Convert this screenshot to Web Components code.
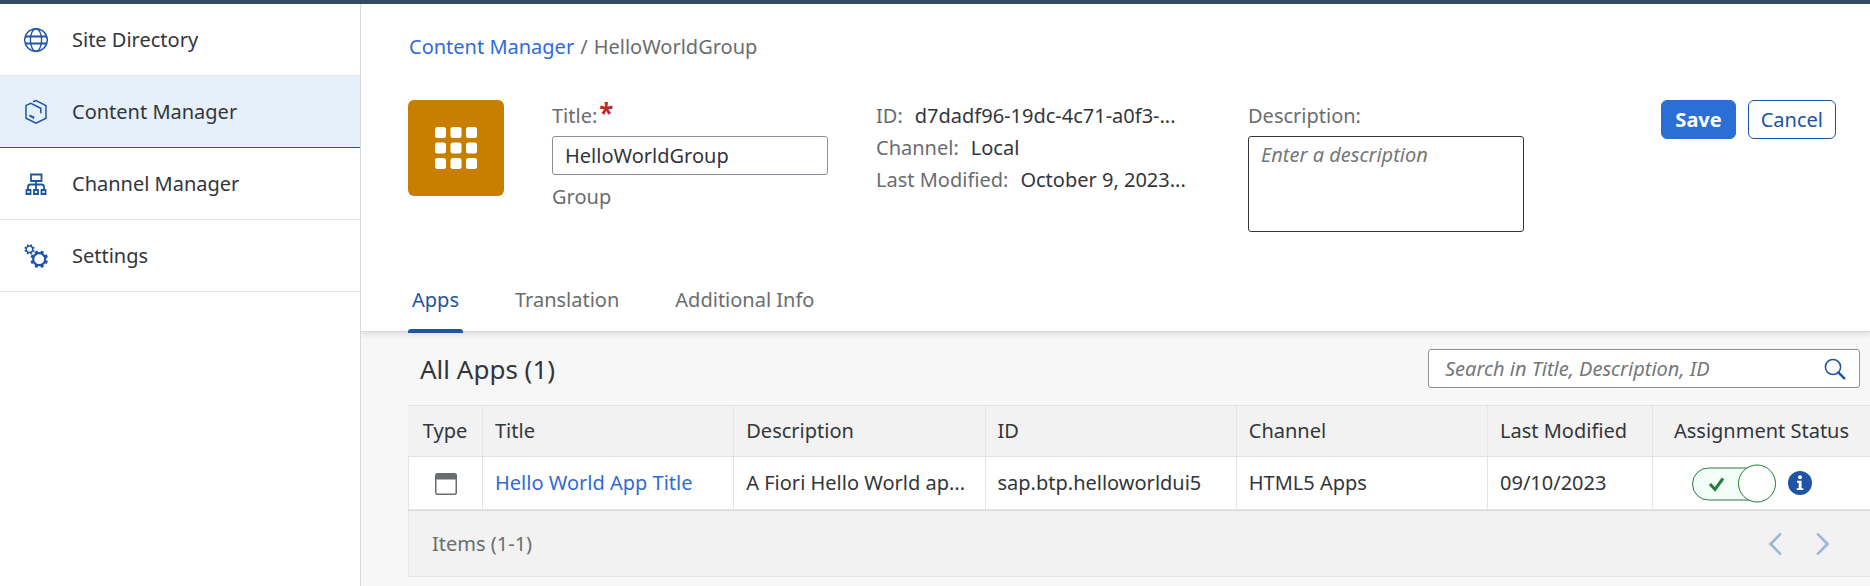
<!DOCTYPE html>
<html lang="en">
<head>
<meta charset="utf-8">
<meta name="viewport" content="width=device-width, initial-scale=1">
<title>Content Manager</title>
<style>
  html, body { height: 100%; }
  body {
    margin: 0;
    --brand: #1d54a4;
    --link: #2f6bd8;
    --text: #32363a;
    --muted: #6a6d70;
    --line: #e4e4e4;
    --field: #89919a;
    font: 20px/24px "Noto Sans", "Open Sans", sans-serif;
    color: var(--text);
    background: #f7f7f7;
  }
</style>
</head>
<body>
<site-shell>
  <side-nav slot="nav">
    <nav-item href="#sites" icon="globe">Site Directory</nav-item>
    <nav-item href="#content" icon="box" selected>Content Manager</nav-item>
    <nav-item href="#channels" icon="tree">Channel Manager</nav-item>
    <nav-item href="#settings" icon="gears">Settings</nav-item>
  </side-nav>
  <group-header></group-header>
  <tab-bar>
    <tab-item selected>Apps</tab-item>
    <tab-item>Translation</tab-item>
    <tab-item>Additional Info</tab-item>
  </tab-bar>
  <apps-panel></apps-panel>
</site-shell>

<script>
const gear = (cx, cy, r, teeth, w, h, stroke) => {
  let out = `<circle cx="${cx}" cy="${cy}" r="${r}" fill="none" stroke="currentColor" stroke-width="${stroke}"/>`;
  for (let i = 0; i < teeth; i++) {
    out += `<rect x="${cx - w / 2}" y="${cy - r - h}" width="${w}" height="${h}" fill="currentColor" transform="rotate(${(i + .5) * 360 / teeth} ${cx} ${cy})"/>`;
  }
  return out;
};

const icons = {
  globe: `<svg width="24" height="26" viewBox="0 0 24 26" fill="none" stroke="currentColor"><circle cx="12" cy="13" r="11.3" stroke-width="1.4"/><ellipse cx="12" cy="13" rx="5.6" ry="11.3" stroke-width="1.4"/><path d="M1.4 9.5h21.2M1.4 16.5h21.2" stroke-width="2"/></svg>`,
  box: `<svg width="24" height="26" viewBox="0 0 24 26" fill="none" stroke="currentColor" stroke-width="1.5"><path d="M9 2.8L12 1.6l10 5v12.6L12 24.2 2 19.2V6.4l4.8-2L16.8 9.3v5"/><path d="M5.4 16.4l4.8 2.6" stroke-width="2"/></svg>`,
  tree: `<svg width="24" height="26" viewBox="0 0 24 26" fill="none" stroke="currentColor" stroke-width="1.8"><path d="M7 3.5h10.5v6.5H7zM12 10V19M4 19v-3q0-2.5 2.5-2.5h11q2.5 0 2.5 2.5v3M2.5 19h4v4h-4zM10 19h4v4h-4zM17.5 19h4v4h-4z"/></svg>`,
  gears: `<svg width="24" height="26" viewBox="0 0 24 26">${gear(5.5, 6.3, 3.2, 8, 1.8, 2, 1.4)}${gear(15.2, 16.2, 6, 8, 3.2, 2.8, 2.2)}</svg>`,
  search: `<svg width="24" height="24" viewBox="0 0 24 24" fill="none" stroke="currentColor"><circle cx="10" cy="10" r="7.6" stroke-width="1.5"/><path d="M15.3 15.3l6 6" stroke-width="2.5" stroke-linecap="round"/></svg>`,
  app: `<svg width="22" height="22" viewBox="0 0 22 22"><rect x=".75" y=".75" width="20.5" height="20.5" rx="1.5" fill="#fff" stroke="#6a6d70" stroke-width="1.5"/><path d="M1 1h20v5.5H1z" fill="#6a6d70"/></svg>`,
  info: `<svg width="24" height="24" viewBox="0 0 24 24"><circle cx="12" cy="12" r="12" fill="currentColor"/><circle cx="12" cy="6.3" r="2" fill="#fff"/><path d="M9 9.8h4.6v7.4H15.3v1.9H8.8v-1.9h1.9v-5.5H9z" fill="#fff"/></svg>`,
  left: `<svg width="24" height="24" viewBox="0 0 24 24" fill="none" stroke="currentColor" stroke-width="2.6" stroke-linecap="round"><path d="M17 2.3L7.5 12l9.5 9.7"/></svg>`,
  right: `<svg width="24" height="24" viewBox="0 0 24 24" fill="none" stroke="currentColor" stroke-width="2.6" stroke-linecap="round"><path d="M7 2.3l9.5 9.7L7 21.7"/></svg>`,
  grid: `<svg width="42" height="42" viewBox="0 0 42 42" fill="#fff">${[0, 15.5, 31].map(y => [0, 15.5, 31].map(x => `<rect x="${x}" y="${y}" width="11" height="11" rx="2.5"/>`).join("")).join("")}</svg>`
};

const define = (name, render) => customElements.define(name, class extends HTMLElement {
  constructor() {
    super();
    this.attachShadow({ mode: "open" });
  }
  connectedCallback() {
    this.shadowRoot.innerHTML = render(this);
  }
});

define("ui-icon", el => `
  <style>:host { display: inline-flex; flex: none; } svg { display: block; }</style>
  ${icons[el.getAttribute("name")]}`);

define("site-shell", () => `
  <style>
    :host { display: grid; grid-template-columns: 360px minmax(0, 1fr); min-height: 100%; box-sizing: border-box; border-top: 4px solid #354a5f; }
    main { display: flex; flex-direction: column; border-left: 1px solid #d9d9d9; }
  </style>
  <slot name="nav"></slot>
  <main><slot></slot></main>`);

define("side-nav", () => `
  <style>:host { display: block; background: #fff; } nav { display: flex; flex-direction: column; }</style>
  <nav aria-label="Main"><slot></slot></nav>`);

define("nav-item", el => `
  <style>
    :host { display: block; border-bottom: 1px solid var(--line); }
    :host([selected]) { background: #e5f0fa; border-bottom-color: var(--brand); }
    a { display: flex; align-items: center; gap: 24px; height: 71px; padding: 0 24px; color: var(--text); text-decoration: none; }
    ui-icon { color: var(--brand); }
  </style>
  <a href="${el.getAttribute("href")}"><ui-icon name="${el.getAttribute("icon")}"></ui-icon><span><slot></slot></span></a>`);

define("ui-button", () => `
  <style>
    :host { display: inline-block; }
    button { font: inherit; height: 39px; padding: 0 12px; border: 1px solid var(--brand); border-radius: 6px; background: #fff; color: var(--brand); }
    :host([primary]) button { padding: 0 13px; background: #2a6fd6; border-color: #2a6fd6; color: #fff; font-weight: 700; }
  </style>
  <button type="button"><slot></slot></button>`);

define("info-line", el => `
  <style>
    :host { display: flex; gap: 12px; white-space: nowrap; }
    dt { color: var(--muted); } dd { margin: 0; }
    dt, dd { line-height: 32px; }
  </style>
  <dt>${el.getAttribute("label")}:</dt><dd><slot></slot></dd>`);

define("group-header", () => `
  <style>
    :host { display: block; background: #fff; padding: 31px 34px 32px 48px; }
    nav { display: flex; gap: 6px; color: var(--muted); }
    nav a { color: var(--link); text-decoration: none; }
    .row { display: grid; grid-template-columns: 96px minmax(160px, 276px) minmax(200px, 324px) minmax(160px, 276px) 1fr; gap: 48px; align-items: start; margin: 41px 0 0 -1px; }
    .tile { display: grid; place-items: center; height: 96px; border-radius: 6px; background: #c87f00; }
    .field { display: flex; flex-direction: column; color: var(--muted); }
    label { line-height: 32px; margin-bottom: 4px; }
    b { margin-left: 2px; color: #bb2a2a; font-size: 26px; line-height: 24px; }
    input, textarea { font: inherit; color: var(--text); box-sizing: border-box; width: 100%; margin: 0; padding: 0 12px; border: 1px solid var(--field); border-radius: 3px; background: #fff; }
    input { height: 39px; }
    textarea { display: block; height: 96px; padding: 6px 12px; border-color: var(--text); resize: none; }
    ::placeholder { color: #74777a; font-style: italic; opacity: 1; }
    .kind { margin-top: 10px; }
    dl { margin: 0; }
    .actions { display: flex; justify-content: flex-end; gap: 12px; }
  </style>
  <nav aria-label="Breadcrumb"><a href="#content">Content Manager</a><span>/</span><span>HelloWorldGroup</span></nav>
  <div class="row">
    <div class="tile"><ui-icon name="grid"></ui-icon></div>
    <div class="field"><label for="title">Title:<b>*</b></label><input id="title" type="text" value="HelloWorldGroup"><span class="kind">Group</span></div>
    <dl>
      <info-line label="ID">d7dadf96-19dc-4c71-a0f3-...</info-line>
      <info-line label="Channel">Local</info-line>
      <info-line label="Last Modified">October 9, 2023...</info-line>
    </dl>
    <div class="field"><label for="description">Description:</label><textarea id="description" placeholder="Enter a description"></textarea></div>
    <div class="actions"><ui-button primary>Save</ui-button><ui-button>Cancel</ui-button></div>
  </div>`);

define("tab-bar", () => `
  <style>
    :host { display: block; position: relative; background: #fff; border-bottom: 1px solid #d9d9d9; box-shadow: 0 2px 6px rgba(0, 0, 0, .12); clip-path: inset(0 0 -12px 0); }
    div { display: flex; gap: 48px; padding: 0 47px; }
  </style>
  <div role="tablist"><slot></slot></div>`);

define("tab-item", el => `
  <style>
    :host { display: block; }
    button { font: inherit; display: block; position: relative; height: 67px; padding: 4px 4px 0; border: 0; background: none; color: var(--muted); }
    button[aria-selected=true] { color: var(--brand); }
    button[aria-selected=true]::after { content: ""; position: absolute; left: 0; right: 0; bottom: -2px; height: 4px; border-radius: 3px 3px 0 0; background: var(--brand); }
  </style>
  <button type="button" role="tab" aria-selected="${el.hasAttribute("selected")}"><slot></slot></button>`);

define("search-field", el => `
  <style>
    :host { display: flex; align-items: center; box-sizing: border-box; width: 432px; height: 39px; padding: 0 12px 0 16px; border: 1px solid var(--field); border-radius: 3px; background: #fff; }
    input { font: inherit; color: inherit; flex: 1; min-width: 0; padding: 0; border: 0; outline: 0; background: none; }
    ::placeholder { color: #74777a; font-style: italic; opacity: 1; }
    button { display: flex; padding: 0; border: 0; background: none; color: var(--brand); }
  </style>
  <input type="text" aria-label="Search apps" placeholder="${el.getAttribute("placeholder")}">
  <button type="button" aria-label="Search"><ui-icon name="search"></ui-icon></button>`);

define("ui-switch", el => `
  <style>
    :host { display: inline-flex; }
    input { appearance: none; margin: 0; width: 84px; height: 39px; background: no-repeat center / 100% 100% url("data:image/svg+xml,%3Csvg xmlns='http://www.w3.org/2000/svg' viewBox='0 0 84 39' fill='none' stroke='%23257d3a'%3E%3Crect x='.5' y='4' width='80' height='32' rx='16' fill='%23f1fdf6'/%3E%3Ccircle cx='65' cy='19.5' r='18.5' fill='%23fff'/%3E%3Cpath d='M18 20l5 5.5 8-11' stroke-width='3'/%3E%3C/svg%3E"); }
  </style>
  <input type="checkbox" role="switch" checked aria-label="${el.getAttribute("label")}">`);

define("apps-table", () => `
  <style>
    :host { display: block; }
    table { width: 100%; table-layout: fixed; border-collapse: separate; border-spacing: 0; }
    .type { width: 75px; } .date { width: 165px; } .status { width: 217px; }
    th, td { box-sizing: border-box; padding: 0 12px; text-align: left; font-weight: 400; white-space: nowrap; border-right: 1px solid var(--line); border-bottom: 1px solid var(--line); }
    th { height: 52px; border-top: 1px solid var(--line); background: #f2f2f2; }
    td { height: 53px; background: #fff; }
    td:first-child { border-left: 1px solid var(--line); }
    tr > :first-child, tr > :last-child { text-align: center; padding: 0; }
    tr > :last-child { border-right: 0; }
    a { color: var(--link); text-decoration: none; }
    ui-icon { vertical-align: middle; color: var(--brand); }
    .state { display: flex; align-items: center; justify-content: center; gap: 12px; padding-right: 20px; }
  </style>
  <table>
    <thead><tr><th class="type">Type</th><th>Title</th><th>Description</th><th>ID</th><th>Channel</th><th class="date">Last Modified</th><th class="status">Assignment Status</th></tr></thead>
    <tbody><tr>
      <td><ui-icon name="app"></ui-icon></td>
      <td><a href="#app">Hello World App Title</a></td>
      <td>A Fiori Hello World ap...</td>
      <td>sap.btp.helloworldui5</td>
      <td>HTML5 Apps</td>
      <td>09/10/2023</td>
      <td><div class="state"><ui-switch label="Assigned"></ui-switch><ui-icon name="info"></ui-icon></div></td>
    </tr></tbody>
  </table>`);

define("table-footer", () => `
  <style>
    :host { display: flex; align-items: center; justify-content: space-between; box-sizing: border-box; height: 67px; padding: 0 35px 0 23px; color: var(--muted); background: #f2f2f2; border: 1px solid var(--line); border-top-color: #d9d9d9; border-right: 0; }
    div { display: flex; gap: 24px; }
    button { display: flex; padding: 0; border: 0; background: none; color: #9db5d9; }
  </style>
  <span><slot></slot></span>
  <div><button type="button" disabled aria-label="Previous page"><ui-icon name="left"></ui-icon></button><button type="button" disabled aria-label="Next page"><ui-icon name="right"></ui-icon></button></div>`);

define("apps-panel", () => `
  <style>
    :host { display: block; padding-left: 47px; background: #f7f7f7; }
    header { display: flex; align-items: center; justify-content: space-between; height: 73px; padding: 0 10px 0 12px; }
    h2 { margin: 0; font-size: 26px; line-height: 32px; font-weight: 400; }
  </style>
  <header><h2>All Apps (1)</h2><search-field placeholder="Search in Title, Description, ID"></search-field></header>
  <apps-table></apps-table>
  <table-footer>Items (1-1)</table-footer>`);
</script>
</body>
</html>
